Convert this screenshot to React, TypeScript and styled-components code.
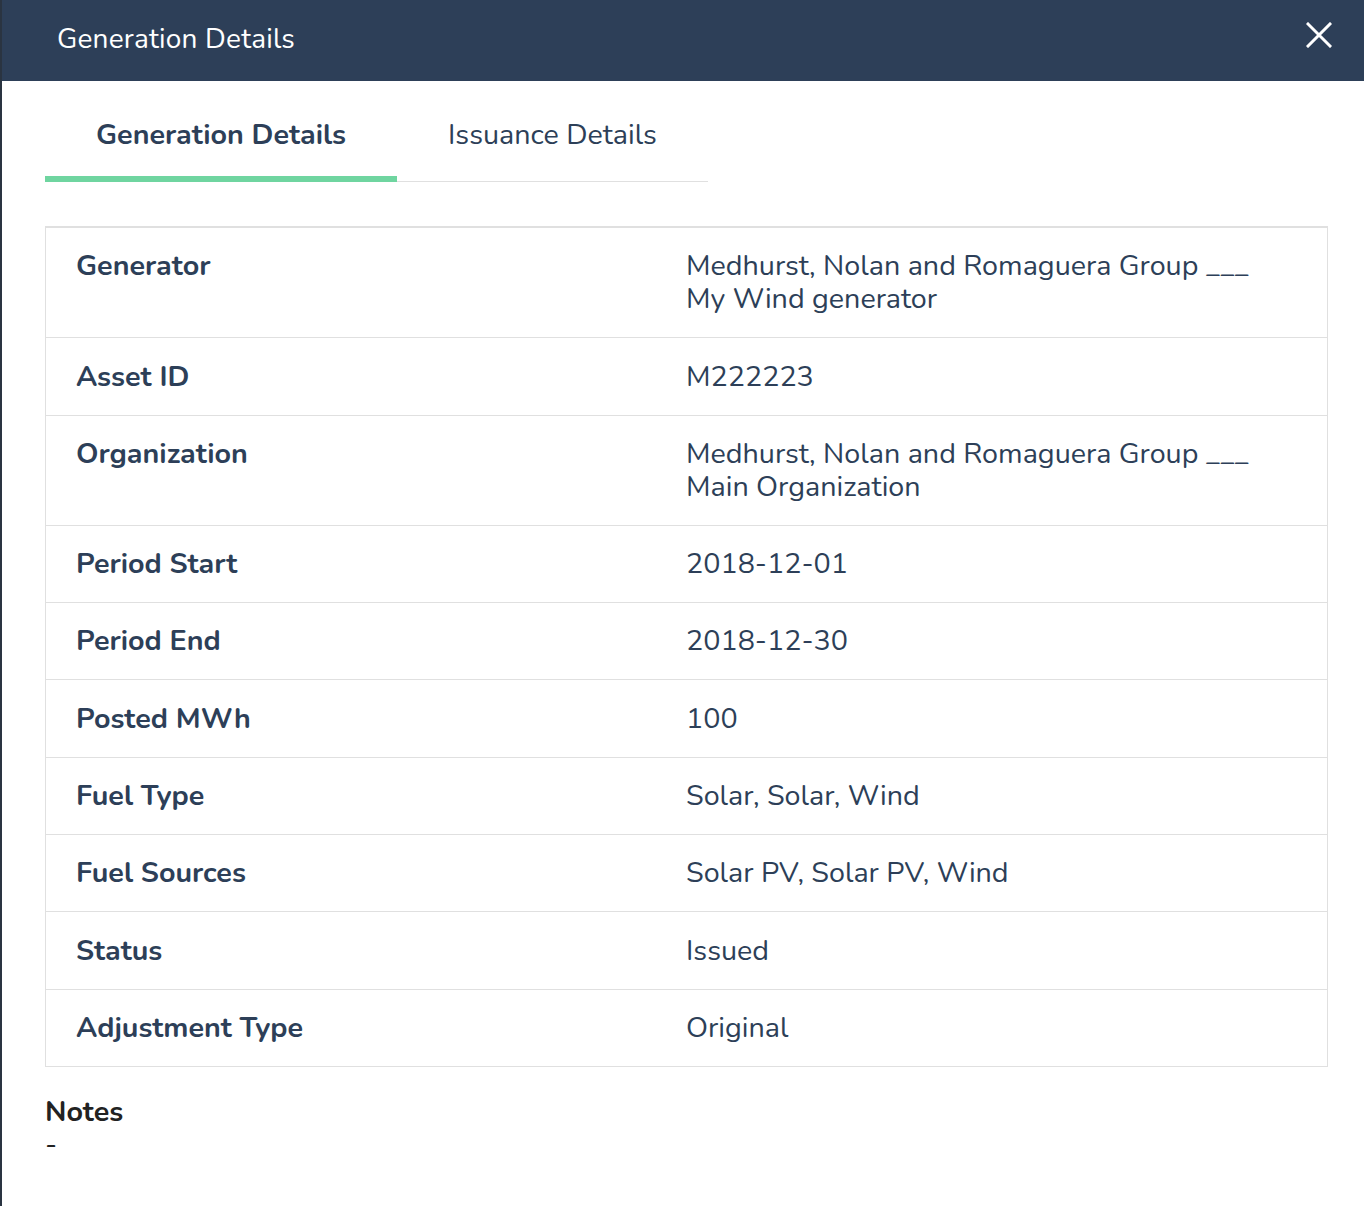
import React from "react";
import styled, { createGlobalStyle } from "styled-components";

const Global = createGlobalStyle`
  html, body { margin: 0; padding: 0; background: #2a3441; }
  body { font-family: "Nunito", "Lato", "Noto Sans", sans-serif; }
  * { box-sizing: border-box; }
`;

const Modal = styled.div`
  margin-left: 2px;
  min-height: 1206px;
  background: #ffffff;
  display: flex;
  flex-direction: column;
`;

const Header = styled.header`
  height: 81px;
  background: #2d3f58;
  display: flex;
  align-items: center;
  justify-content: space-between;
  padding: 0 30px 0 55px;
`;

const Title = styled.h1`
  margin: 0 0 4px;
  color: #ffffff;
  font-size: 28px;
  font-weight: 400;
  letter-spacing: 0.2px;
`;

const CloseButton = styled.button`
  background: none;
  border: none;
  padding: 0;
  margin-bottom: 12px;
  width: 30px;
  height: 30px;
  display: flex;
  align-items: center;
  justify-content: center;
  cursor: pointer;
`;

const Body = styled.div`
  padding: 0 36px 0 43px;
  display: flex;
  flex-direction: column;
`;

const Tabs = styled.div`
  display: flex;
  align-self: flex-start;
  border-bottom: 1px solid #e0e0e0;
`;

const Tab = styled.div<{ $active?: boolean }>`
  height: 101px;
  padding: 12px 51px 0;
  display: flex;
  align-items: center;
  font-size: 28.7px;
  color: #2d3f58;
  font-weight: ${(p) => (p.$active ? 700 : 400)};
  border-bottom: 6px solid ${(p) => (p.$active ? "#6fd5a0" : "transparent")};
  margin-bottom: -1px;
`;

const Table = styled.div`
  margin-top: 44px;
  border: 1px solid #e0e0e0;
  border-top: 2px solid #e0e0e0;
`;

const Row = styled.div`
  display: grid;
  grid-template-columns: 610px 1fr;
  border-top: 1px solid #e0e0e0;
  &:first-child { border-top: none; }
`;

const Label = styled.div`
  padding: 21.3px 30px 22px;
  font-size: 28.7px;
  line-height: 33px;
  font-weight: 700;
  color: #2d3f58;
`;

const Value = styled.div`
  padding: 21.3px 30px 22px;
  font-size: 28.7px;
  line-height: 33px;
  font-weight: 400;
  color: #2d3f58;
`;

const Notes = styled.div`
  margin-top: 28px;
  color: #222222;
  font-size: 28.7px;
`;

const NotesTitle = styled.div`
  font-weight: 700;
  line-height: 33px;
`;

const NotesText = styled.div`
  line-height: 33px;
`;

const rows: [string, string[]][] = [
  ["Generator", ["Medhurst, Nolan and Romaguera Group ___", "My Wind generator"]],
  ["Asset ID", ["M222223"]],
  ["Organization", ["Medhurst, Nolan and Romaguera Group ___", "Main Organization"]],
  ["Period Start", ["2018-12-01"]],
  ["Period End", ["2018-12-30"]],
  ["Posted MWh", ["100"]],
  ["Fuel Type", ["Solar, Solar, Wind"]],
  ["Fuel Sources", ["Solar PV, Solar PV, Wind"]],
  ["Status", ["Issued"]],
  ["Adjustment Type", ["Original"]],
];

export default function App() {
  return (
    <>
      <Global />
      <Modal>
        <Header>
          <Title>Generation Details</Title>
          <CloseButton aria-label="Close">
            <svg width="26" height="26" viewBox="0 0 26 26">
              <path d="M2 2 L24 24 M24 2 L2 24" stroke="#fff" strokeWidth="3" strokeLinecap="square" />
            </svg>
          </CloseButton>
        </Header>
        <Body>
          <Tabs>
            <Tab $active>Generation Details</Tab>
            <Tab>Issuance Details</Tab>
          </Tabs>
          <Table>
            {rows.map(([label, value]) => (
              <Row key={label}>
                <Label>{label}</Label>
                <Value>
                  {value.map((v) => (
                    <div key={v}>{v}</div>
                  ))}
                </Value>
              </Row>
            ))}
          </Table>
          <Notes>
            <NotesTitle>Notes</NotesTitle>
            <NotesText>-</NotesText>
          </Notes>
        </Body>
      </Modal>
    </>
  );
}
